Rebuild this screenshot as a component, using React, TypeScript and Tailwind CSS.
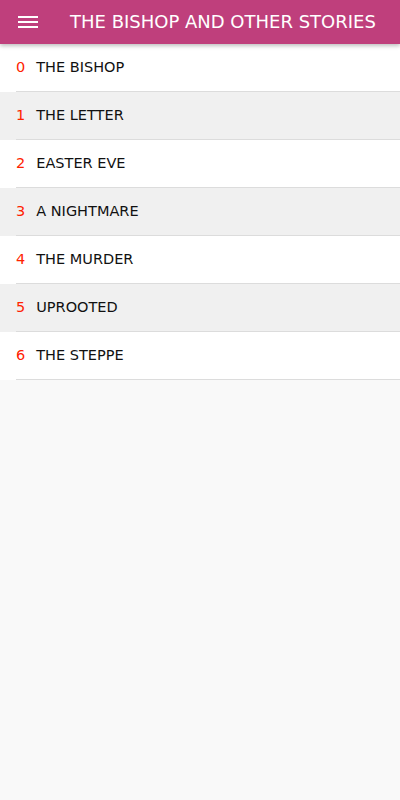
const stories = [
  "THE BISHOP",
  "THE LETTER",
  "EASTER EVE",
  "A NIGHTMARE",
  "THE MURDER",
  "UPROOTED",
  "THE STEPPE",
];

function MenuIcon() {
  return (
    <svg width="20" height="12" viewBox="0 0 20 12" className="block">
      <rect x="0" y="0" width="20" height="2" fill="#fff" />
      <rect x="0" y="5" width="20" height="2" fill="#fff" />
      <rect x="0" y="10" width="20" height="2" fill="#fff" />
    </svg>
  );
}

export default function App() {
  return (
    <div
      className="w-[400px] h-[800px] bg-[#f9f9f9] flex flex-col"
      style={{ fontFamily: '"DejaVu Sans", "Noto Sans", sans-serif' }}
    >
      <header className="h-[44px] bg-[#bf3f7c] flex items-center shadow-[0_2px_4px_rgba(0,0,0,0.25)] relative z-10">
        <div className="pl-[18px] pr-[32px]">
          <MenuIcon />
        </div>
        <h1 className="text-white text-[18px] whitespace-nowrap leading-none">
          THE BISHOP AND OTHER STORIES
        </h1>
      </header>

      <ul>
        {stories.map((title, i) => (
          <li key={title} className={i % 2 === 1 ? "bg-[#f0f0f0]" : "bg-white"}>
            <div className="ml-[16px] h-[48px] flex items-center gap-[11px] border-b border-[#dcdcdc] text-[14.5px]">
              <span className="text-[#ff2200] font-medium">{i}</span>
              <span className="text-[#111]">{title}</span>
            </div>
          </li>
        ))}
      </ul>
    </div>
  );
}
